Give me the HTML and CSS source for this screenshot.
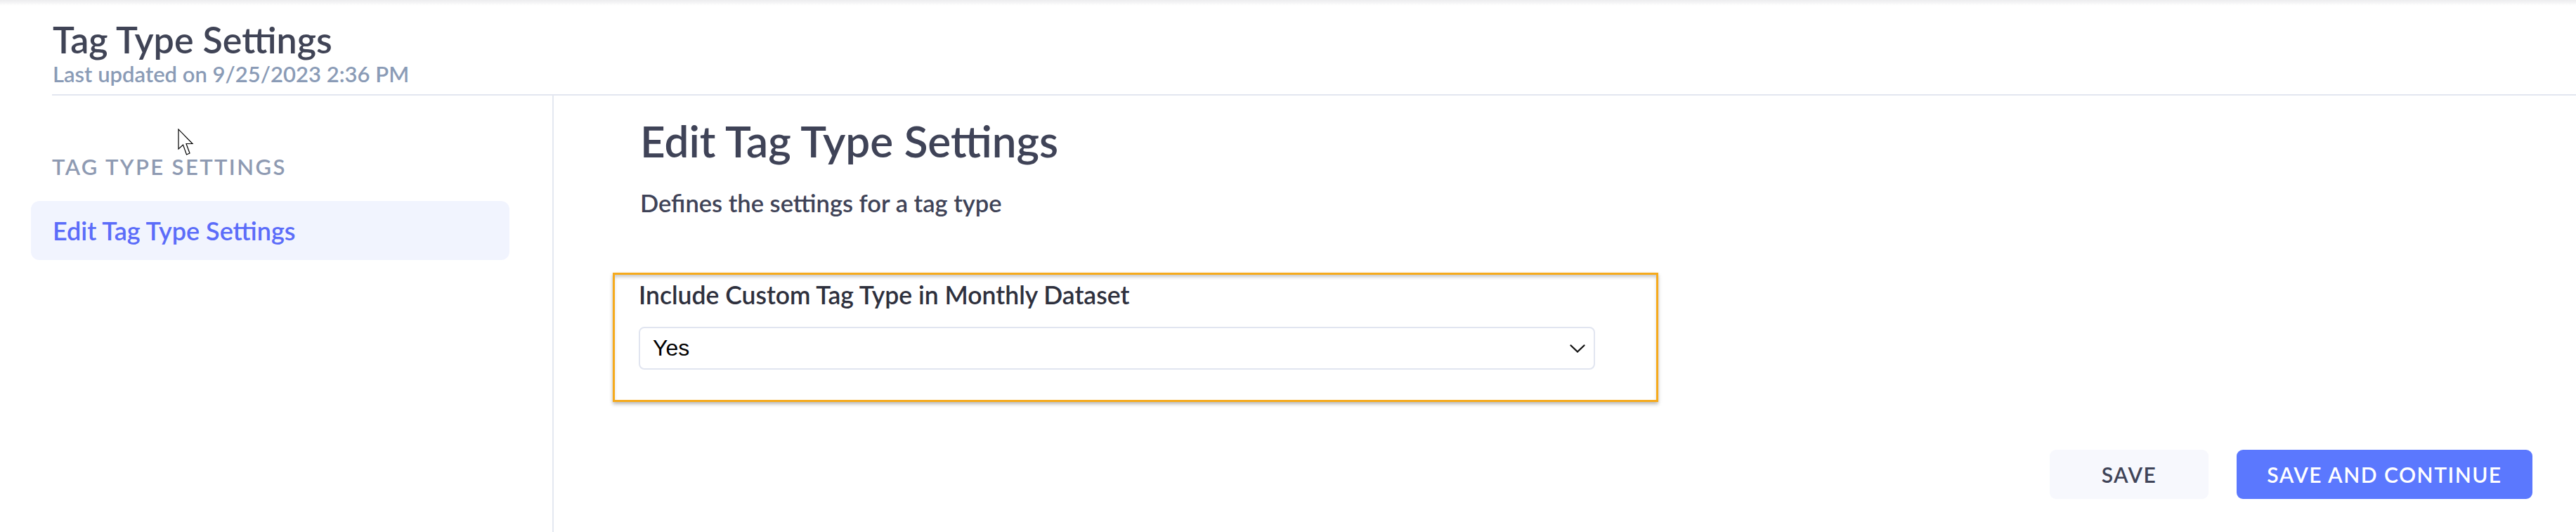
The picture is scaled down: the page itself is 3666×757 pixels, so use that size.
FILE: index.html
```html
<!DOCTYPE html>
<html lang="en">
<head>
<meta charset="utf-8">
<title>Tag Type Settings</title>
<link rel="stylesheet" href="styles.css">
</head>
<body>
<div class="topshade"></div>
<header class="page-header">
  <h1 class="page-title">Tag Type Settings</h1>
  <div class="page-updated">Last updated on 9/25/2023 2:36 PM</div>
</header>
<div class="layout">
  <aside class="sidebar">
    <div class="side-heading">TAG TYPE SETTINGS</div>
    <a class="side-item active">Edit Tag Type Settings</a>
  </aside>
  <main class="content">
    <h2 class="content-title">Edit Tag Type Settings</h2>
    <p class="content-desc">Defines the settings for a tag type</p>
    <section class="card">
      <label class="field-label">Include Custom Tag Type in Monthly Dataset</label>
      <div class="select">
        <span class="select-value">Yes</span>
        <svg class="chevron" viewBox="0 0 22 12" width="22" height="12"><path d="M1.5 1.5 L11 10.5 L20.5 1.5" fill="none" stroke="#111" stroke-width="2.3" stroke-linecap="round" stroke-linejoin="miter"/></svg>
      </div>
    </section>
    <div class="actions">
      <button class="btn btn-light">SAVE</button>
      <button class="btn btn-primary">SAVE AND CONTINUE</button>
    </div>
  </main>
</div>
<svg class="cursor" viewBox="0 0 26 40" width="26" height="40"><path d="M1 1 L1 29 L7.5 23 L12.5 37 L17 35 L12 21.5 L21 21.5 Z" fill="#fff" stroke="#000" stroke-width="1.2" stroke-linejoin="miter"/></svg>
</body>
</html>
```

FILE: styles.css
```css
* { box-sizing: border-box; }
html, body { margin: 0; padding: 0; background: #fff; }
body {
  font-family: Lato, "Noto Sans", sans-serif;
  color: #3f4357;
  width: 3666px;
  height: 757px;
  overflow: hidden;
  position: relative;
}
.topshade {
  height: 8px;
  background: linear-gradient(to bottom, #ececee, #fff);
}
.page-header {
  margin-left: 74px;
  padding: 18px 0 10px 1px;
  border-bottom: 2px solid #e2e6f0;
}
.page-title {
  margin: 0;
  font-size: 52px;
  line-height: 60px;
  font-weight: 600;
  color: #404456;
}
.page-updated {
  font-size: 31px;
  line-height: 38px;
  font-weight: 600;
  color: #8a9bb6;
}
.layout {
  display: flex;
  height: 624px;
}
.sidebar {
  width: 788px;
  flex: none;
  border-right: 2px solid #e4e8f0;
  padding: 82px 61px 0 44px;
  display: flex;
  flex-direction: column;
}
.side-heading {
  padding-left: 30px;
  font-size: 31px;
  line-height: 38px;
  letter-spacing: 2.4px;
  font-weight: 600;
  color: #8e9ab2;
}
.side-item {
  margin-top: 30px;
  height: 84px;
  display: flex;
  align-items: center;
  padding-left: 31px;
  border-radius: 12px;
  background: #f1f4fe;
  color: #5b6cf9;
  font-size: 36px;
  font-weight: 600;
}
.content {
  flex: 1;
  padding: 26px 62px 0 123px;
  display: flex;
  flex-direction: column;
}
.content-title {
  margin: 0;
  font-size: 62px;
  line-height: 76px;
  font-weight: 600;
  color: #3f4357;
}
.content-desc {
  margin: 30px 0 0;
  font-size: 34.5px;
  line-height: 42px;
  font-weight: 600;
  color: #3f4357;
}
.card {
  margin: 78px 0 0 -39px;
  width: 1488px;
  height: 184px;
  border: 3px solid #f6aa1c;
  box-shadow: 0 3px 5px rgba(0,0,0,0.28), inset 0 4px 5px -1px rgba(0,0,0,0.22);
  padding: 8px 0 0 34px;
}
.field-label {
  display: block;
  font-size: 35.5px;
  line-height: 42px;
  font-weight: 600;
  color: #2e303d;
}
.select {
  margin-top: 24px;
  width: 1361px;
  height: 61px;
  border: 2px solid #e1e5f0;
  border-radius: 8px;
  display: flex;
  align-items: center;
  justify-content: space-between;
  padding: 0 12px 0 18px;
}
.select-value {
  font-family: "Liberation Sans", Arial, sans-serif;
  font-size: 32px;
  color: #000;
}
.chevron { display: block; }
.actions {
  margin-top: 68px;
  display: flex;
  justify-content: flex-end;
  gap: 40px;
}
.btn {
  height: 70px;
  border: none;
  border-radius: 9px;
  font-family: Lato, "Noto Sans", sans-serif;
  font-size: 30px;
  font-weight: 600;
  letter-spacing: 1.5px;
  padding: 0;
}
.btn-light {
  width: 226px;
  background: #f7f8fd;
  color: #3f4357;
}
.btn-primary {
  width: 421px;
  background: #5b78fe;
  color: #fff;
}
.cursor {
  position: absolute;
  left: 253px;
  top: 183px;
}
```
